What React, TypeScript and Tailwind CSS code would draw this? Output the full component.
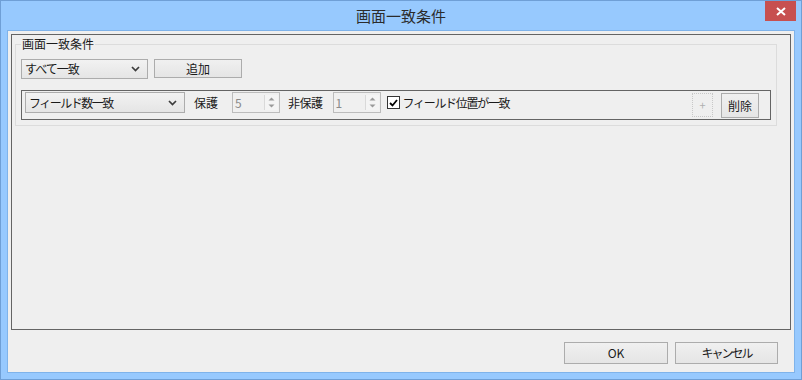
import type { ReactNode } from 'react';

const font = { fontFamily: '"Noto Sans CJK JP", "Liberation Sans", sans-serif' };

function Chevron() {
  return (
    <svg width="9" height="6" viewBox="0 0 9 6" aria-hidden>
      <path d="M1 1 L4.5 4.5 L8 1" fill="none" stroke="#3c3c3c" strokeWidth="1.7" />
    </svg>
  );
}

function Combo({ label, className, tracking }: { label: string; className: string; tracking: string }) {
  return (
    <div
      className={`flex items-center justify-between border border-[#acacac] bg-gradient-to-b from-[#f2f2f2] to-[#e5e5e5] pl-[3px] pr-[7px] ${className}`}
    >
      <span className={`text-[12px] leading-none text-[#1a1a1a] ${tracking}`}>{label}</span>
      <Chevron />
    </div>
  );
}

function Spin({ value }: { value: string }) {
  return (
    <div className="flex h-[21px] w-[48px] border border-[#bcbcbc] bg-[#f0f0f0]">
      <span className="flex-1 pl-[2px] text-[12px] leading-[19px] text-[#8a8a8a]">{value}</span>
      <div className="my-[2px] mr-[1px] flex w-[14px] flex-col items-center justify-center gap-[3px] border-l border-[#d9d9d9] bg-[#f4f4f4]">
        <svg width="7" height="4" viewBox="0 0 7 4" aria-hidden>
          <path d="M0.5 3.5 L3.5 0.5 L6.5 3.5 Z" fill="#9a9a9a" />
        </svg>
        <svg width="7" height="4" viewBox="0 0 7 4" aria-hidden>
          <path d="M0.5 0.5 L3.5 3.5 L6.5 0.5 Z" fill="#9a9a9a" />
        </svg>
      </div>
    </div>
  );
}

function Button({ children, className }: { children: ReactNode; className: string }) {
  return (
    <div
      className={`flex items-center justify-center border border-[#acacac] bg-gradient-to-b from-[#f0f0f0] to-[#e5e5e5] text-[12px] leading-none text-[#1a1a1a] ${className}`}
    >
      {children}
    </div>
  );
}

export default function App() {
  return (
    <div
      className="flex h-[380px] w-[802px] flex-col border border-[#6f9fd6] bg-[#97c9fe] px-[6px] pb-[6px]"
      style={font}
    >
      {/* title bar */}
      <div className="relative flex h-[29px] shrink-0 items-center justify-center">
        <span className="text-[15px] leading-none text-[#2b2b2b]">画面一致条件</span>
        <div className="absolute right-[-1px] top-0 flex h-[20px] w-[31px] items-center justify-center bg-[#c75050]">
          <svg width="10" height="9" viewBox="0 0 10 9" aria-hidden>
            <path d="M1 1 L9 8 M9 1 L1 8" stroke="#ffffff" strokeWidth="2" />
          </svg>
        </div>
      </div>

      {/* client area */}
      <div className="flex flex-1 flex-col border border-[#7fb3ea] bg-[#efefef]">
        <div className="mx-[3px] mt-[3px] flex h-[296px] flex-col border border-[#646464]">
          {/* group box */}
          <div className="relative ml-[3px] mr-[13px] mt-[9px] border border-[#dcdcdc] px-[5px] pb-[5px] pt-[14px]">
            <span className="absolute left-[5px] top-[-8px] bg-[#efefef] px-[1px] text-[12px] leading-[14px] text-[#1a1a1a]">
              画面一致条件
            </span>
            <div className="flex items-start gap-[6px]">
              <Combo label="すべて一致" tracking="tracking-[-1px]" className="h-[20px] w-[127px]" />
              <Button className="h-[19px] w-[88px]">追加</Button>
            </div>
            <div className="mt-[11px] flex h-[30px] items-start border border-[#646464] pl-[3px] pr-[11px] pt-[1px]">
              <Combo label="フィールド数一致" tracking="tracking-[-1.5px]" className="h-[21px] w-[160px]" />
              <span className="ml-[9px] text-[12px] leading-[21px] text-[#1a1a1a]">保護</span>
              <div className="ml-[14px]">
                <Spin value="5" />
              </div>
              <span className="ml-[8px] text-[12px] leading-[21px] text-[#1a1a1a] tracking-[-0.5px]">非保護</span>
              <div className="ml-[10px]">
                <Spin value="1" />
              </div>
              <div className="ml-[6px] mt-[4px] flex h-[13px] w-[13px] items-center justify-center border border-[#333333] bg-white">
                <svg width="9" height="8" viewBox="0 0 9 8" aria-hidden>
                  <path d="M1 4 L3.5 6.5 L8 1" fill="none" stroke="#000000" strokeWidth="1.8" />
                </svg>
              </div>
              <span className="ml-[3px] text-[12px] leading-[21px] text-[#1a1a1a] tracking-[-1.3px]">フィールド位置が一致</span>
              <div className="ml-auto mt-[1px] flex h-[24px] w-[21px] items-center justify-center border border-dotted border-[#c8c8c8] text-[11px] leading-none text-[#b0b0b0]">
                +
              </div>
              <Button className="ml-[8px] mt-[1px] h-[25px] w-[38px]">削除</Button>
            </div>
          </div>
        </div>
        <div className="flex flex-1 items-start justify-end gap-[7px] pr-[16px] pt-[12px]">
          <Button className="h-[22px] w-[104px]">OK</Button>
          <Button className="h-[22px] w-[103px] tracking-[-2px]">キャンセル</Button>
        </div>
      </div>
    </div>
  );
}
